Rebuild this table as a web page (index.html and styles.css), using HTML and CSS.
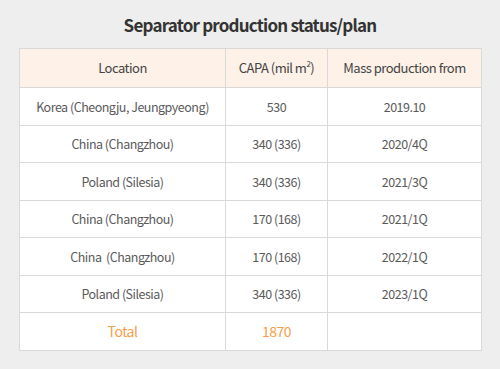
FILE: index.html
```html
<!DOCTYPE html>
<html>
<head>
<meta charset="utf-8">
<link rel="stylesheet" href="styles.css">
</head>
<body>
<div class="page">
  <h1 class="title">Separator production status/plan</h1>
  <table class="plan">
    <colgroup>
      <col class="c1"><col class="c2"><col class="c3">
    </colgroup>
    <thead>
      <tr class="head">
        <th>Location</th>
        <th>CAPA (mil m<sup>2</sup>)</th>
        <th>Mass production from</th>
      </tr>
    </thead>
    <tbody>
      <tr><td>Korea (Cheongju, Jeungpyeong)</td><td>530</td><td>2019.10</td></tr>
      <tr><td>China (Changzhou)</td><td>340 (336)</td><td>2020/4Q</td></tr>
      <tr><td>Poland (Silesia)</td><td>340 (336)</td><td>2021/3Q</td></tr>
      <tr><td>China (Changzhou)</td><td>170 (168)</td><td>2021/1Q</td></tr>
      <tr><td>China&nbsp; (Changzhou)</td><td>170 (168)</td><td>2022/1Q</td></tr>
      <tr><td>Poland (Silesia)</td><td>340 (336)</td><td>2023/1Q</td></tr>
      <tr class="total"><td>Total</td><td>1870</td><td></td></tr>
    </tbody>
  </table>
</div>
</body>
</html>
```
FILE: styles.css
```css
html, body {
  margin: 0;
  padding: 0;
  background: #eeeeee;
}
.page {
  width: 500px;
  height: 369px;
  padding: 12px 19px 0 19px;
  box-sizing: border-box;
  font-family: "Noto Sans CJK KR", "Noto Sans", sans-serif;
}
.title {
  margin: 0 0 11px 0;
  text-align: center;
  font-size: 17px;
  line-height: 25px;
  font-weight: 700;
  color: #333333;
  letter-spacing: -0.8px;
}
.plan {
  width: 462px;
  border-collapse: collapse;
  table-layout: fixed;
  background: #ffffff;
}
.c1 { width: 206px; }
.c2 { width: 102px; }
.c3 { width: 154px; }
.plan th, .plan td {
  border: 1px solid #d9d9d9;
  text-align: center;
  font-size: 12.5px;
  font-weight: 400;
  color: #5a5a5a;
  padding: 0;
  letter-spacing: -0.5px;
}
.plan th {
  height: 36px;
  padding-bottom: 2px;
  background: #fdf1e8;
  font-size: 13px;
  color: #444444;
}
.plan td {
  height: 36.5px;
}
.plan sup {
  font-size: 8px;
  line-height: 0;
  vertical-align: 6px;
}
.total td {
  color: #f89d4a;
  font-size: 14px;
}
```
